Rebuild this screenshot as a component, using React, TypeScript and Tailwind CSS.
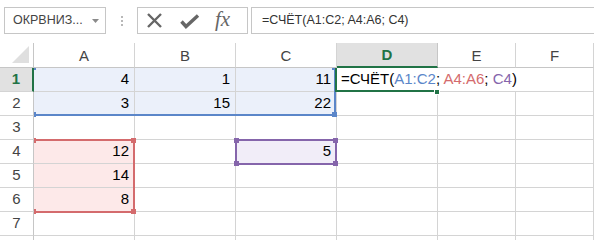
import React from 'react';

type Fill = 'blue' | 'red' | 'purple' | '';

const columns = ['A', 'B', 'C', 'D', 'E', 'F'];

const rows: string[][] = [
  ['4', '1', '11', '', '', ''],
  ['3', '15', '22', '', '', ''],
  ['', '', '', '', '', ''],
  ['12', '', '5', '', '', ''],
  ['14', '', '', '', '', ''],
  ['8', '', '', '', '', ''],
  ['', '', '', '', '', ''],
  ['', '', '', '', '', ''],
];

const fillClass: Record<Fill, string> = {
  blue: 'bg-[#ebf0fa]',
  red: 'bg-[#fde9e9]',
  purple: 'bg-[#f1edf8]',
  '': '',
};

function cellFill(r: number, c: number): Fill {
  if (r <= 1 && c <= 2) return 'blue';
  if (r >= 3 && r <= 5 && c === 0) return 'red';
  if (r === 3 && c === 2) return 'purple';
  return '';
}

function Handle({ x, y, color }: { x: number; y: number; color: string }) {
  return (
    <div
      className="absolute h-[5px] w-[5px]"
      style={{ left: x - 2, top: y - 2, background: color }}
    />
  );
}

type RangeBox = { x: number; y: number; w: number; h: number; color: string };

// coordinates below are relative to the top-left of cell A1
const ranges: RangeBox[] = [
  { x: -2, y: -2, w: 304, h: 50, color: '#5b86c9' },
  { x: -2, y: 71, w: 103, h: 74, color: '#d46b6d' },
  { x: 201, y: 71, w: 102, h: 26, color: '#8565ab' },
];

function FormulaText() {
  return (
    <span className="whitespace-pre">
      =СЧЁТ(<span className="text-[#5b86c9]">A1:C2</span>;{' '}
      <span className="text-[#d46b6d]">A4:A6</span>;{' '}
      <span className="text-[#8565ab]">C4</span>)
    </span>
  );
}

function Toolbar() {
  return (
    <div className="flex h-[43px] items-start pt-[7px] pl-[4px]">
      <div className="flex h-[27px] w-[102px] items-center border border-[#c6c6c6] pl-[8px] pr-[6px] text-[12.5px] text-[#444]">
        <span className="flex-1">ОКРВНИЗ...</span>
        <svg width="7" height="4" viewBox="0 0 7 4">
          <path d="M0 0h7L3.5 4z" fill="#8a8a8a" />
        </svg>
      </div>
      <div className="flex h-[27px] w-[31px] flex-col items-center justify-center gap-[2px]">
        <div className="h-[2px] w-[2px] bg-[#b8b8b8]" />
        <div className="h-[2px] w-[2px] bg-[#b8b8b8]" />
        <div className="h-[2px] w-[2px] bg-[#b8b8b8]" />
      </div>
      <div className="flex h-[27px] w-[111px] items-center border border-[#c6c6c6] pl-[8px]">
        <svg width="17" height="17" viewBox="0 0 17 17">
          <path d="M2 2l13 13M15 2L2 15" stroke="#666" strokeWidth="2.4" />
        </svg>
        <svg width="20" height="16" viewBox="0 0 20 16" className="ml-[17px]">
          <path d="M1.5 8.5l4.5 5L18 2.5" stroke="#666" strokeWidth="3.4" fill="none" />
        </svg>
        <span className="ml-[15px] mt-[-3px] font-['Liberation_Serif',serif] text-[21px] italic leading-none text-[#666]">
          fx
        </span>
      </div>
      <div className="ml-[3px] flex h-[27px] flex-1 items-center border-y border-l border-[#c6c6c6] pl-[10px] text-[12.5px] text-[#333]">
        =СЧЁТ(A1:C2; A4:A6; C4)
      </div>
    </div>
  );
}

function Sheet() {
  return (
    <div className="relative">
      <div className="grid grid-cols-[34px_101px_101px_101px_101px_78px_1fr] text-[15px]">
        <div className="relative h-[25px] border-r border-b border-[#c6c6c6]">
          <svg width="18" height="18" viewBox="0 0 18 18" className="absolute right-[3px] bottom-[3px]">
            <path d="M17 0v17H0z" fill="#dfdfdf" />
          </svg>
        </div>
        {columns.map((col) =>
          col === 'D' ? (
            <div
              key={col}
              className="flex h-[25px] items-center justify-center border-r border-b-2 border-r-[#c6c6c6] border-b-[#217346] bg-[#e1e1e1] pt-[2px] font-bold text-[#217346]"
            >
              {col}
            </div>
          ) : (
            <div
              key={col}
              className="flex h-[25px] items-center justify-center border-r border-b border-[#d4d4d4] border-b-[#c6c6c6] pt-[2px] text-[#444]"
            >
              {col}
            </div>
          )
        )}
        {rows.map((row, r) => (
          <React.Fragment key={r}>
            {r === 0 ? (
              <div className="flex h-[24px] items-center justify-center border-r-2 border-b border-r-[#217346] border-b-[#d4d4d4] bg-[#e1e1e1] font-semibold text-[#217346]">
                1
              </div>
            ) : (
              <div className="flex h-[24px] items-center justify-center border-r border-b border-[#d4d4d4] border-r-[#c6c6c6] text-[#444]">
                {r < 7 ? r + 1 : ''}
              </div>
            )}
            {row.map((value, c) => {
              const fill = cellFill(r, c);
              if (r === 0 && c === 3) {
                return (
                  <div
                    key={c}
                    className="relative z-10 flex h-[24px] items-center border-b border-[#d4d4d4] pl-[4px] whitespace-nowrap text-black"
                  >
                    <FormulaText />
                    <span className="ml-[1px] inline-block h-[19px] w-px bg-black" />
                  </div>
                );
              }
              const hideRight = r === 0 && c === 4;
              return (
                <div
                  key={c}
                  className={[
                    'flex h-[24px] items-center justify-end border-b border-[#d4d4d4] pr-[5px] text-black',
                    hideRight ? '' : 'border-r',
                    fillClass[fill],
                  ].join(' ')}
                >
                  {value}
                </div>
              );
            })}
          </React.Fragment>
        ))}
      </div>

      {/* range highlights from the formula being edited */}
      <div className="pointer-events-none absolute top-[25px] right-0 bottom-0 left-[34px] z-20 overflow-hidden">
        {ranges.map((rg, i) => (
          <React.Fragment key={i}>
            <div
              className="absolute border-2"
              style={{ left: rg.x, top: rg.y, width: rg.w, height: rg.h, borderColor: rg.color }}
            />
            <Handle x={rg.x + 1} y={rg.y + 1} color={rg.color} />
            <Handle x={rg.x + rg.w - 2} y={rg.y + 1} color={rg.color} />
            <Handle x={rg.x + 1} y={rg.y + rg.h - 2} color={rg.color} />
            <Handle x={rg.x + rg.w - 2} y={rg.y + rg.h - 2} color={rg.color} />
          </React.Fragment>
        ))}
        <div className="absolute top-[-2px] left-[301px] h-[26px] w-[102px] border-b-2 border-l-2 border-[#217346]" />
        <div className="absolute top-[21px] left-[400px] h-[6px] w-[6px] border border-white bg-[#217346]" />
      </div>
    </div>
  );
}

export default function App() {
  return (
    <div className="h-[240px] w-[594px] overflow-hidden bg-white font-['Liberation_Sans',Arial,sans-serif]">
      <Toolbar />
      <Sheet />
    </div>
  );
}
